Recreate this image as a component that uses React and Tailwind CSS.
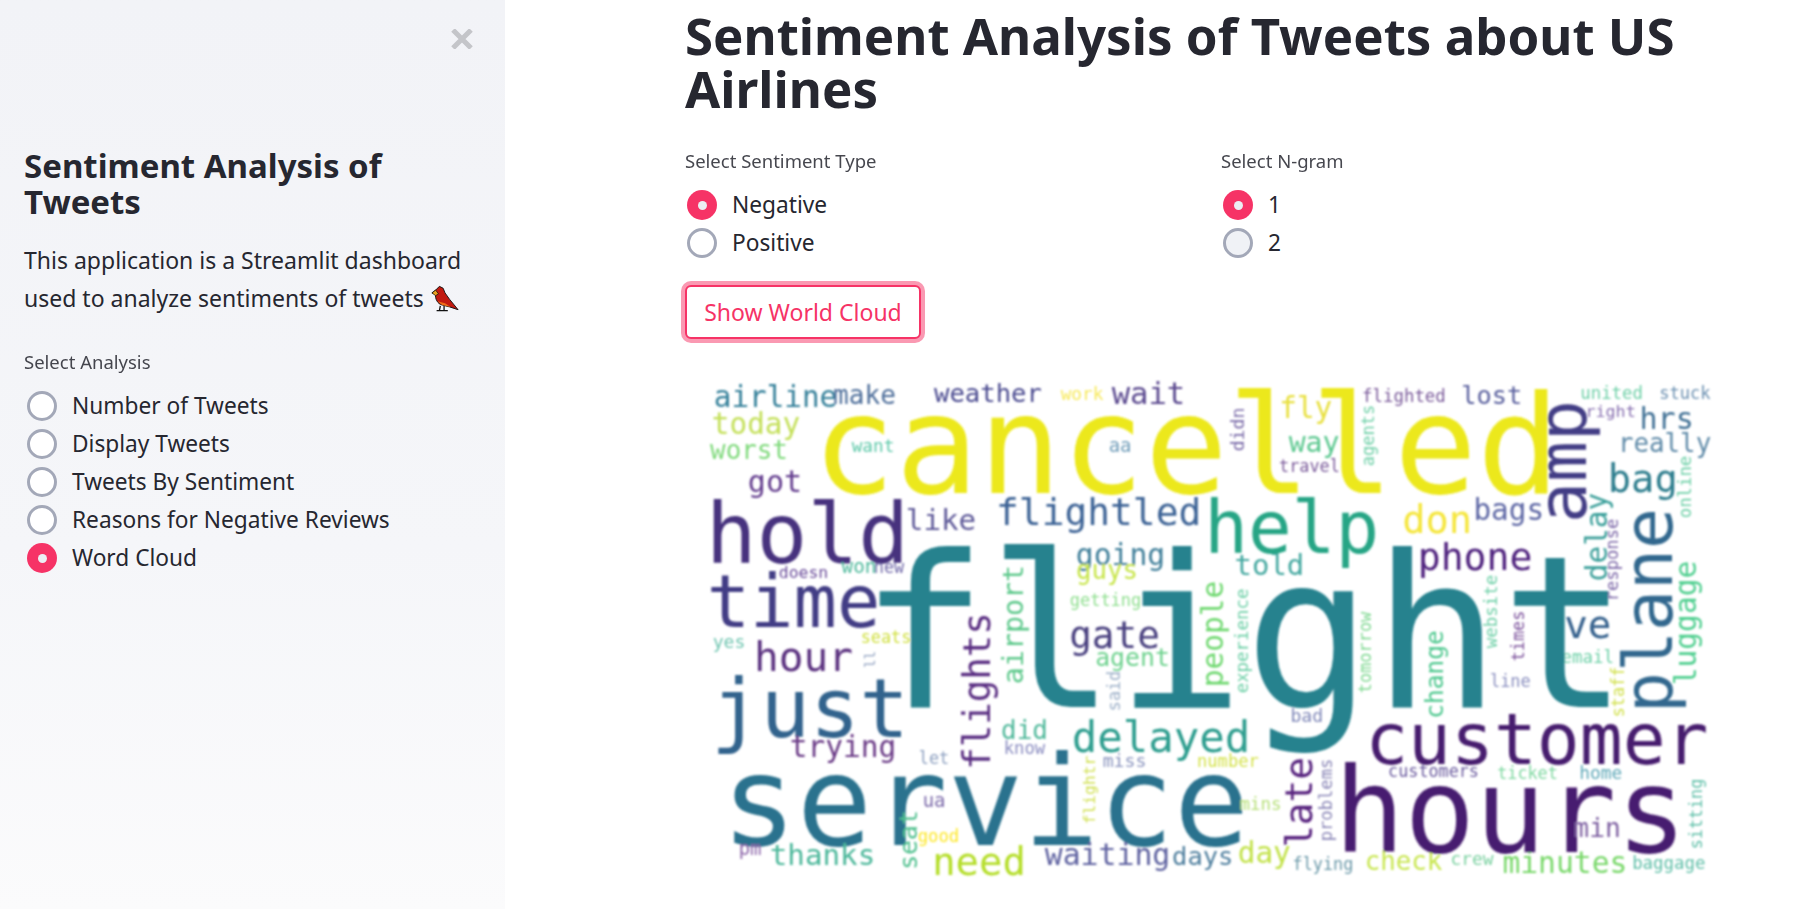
import React from "react";

const rawWords = [
  ["airline",716,835,407,"#35809a"],["make",835,894,404,"#4f6f9b"],["weather",936,1040,402,"#4a4a8f"],["work",1062,1102,400,"#f7e95a"],["wait",1114,1183,404,"#5b4a8f"],
  ["today",714,798,434,"#c4e05a"],["want",853,893,452,"#5cc8a8"],["worst",712,786,459,"#7ed97a"],["aa",1110,1130,452,"#6e9bb8"],
  ["cancelled",822,1537,493,"#ece81a",138],["got",750,800,492,"#643d8e"],["hold",712,903,563,"#46337e"],["flightled",999,1198,525,"#3e6496"],["like",908,974,530,"#5f5a99"],
  ["going",1078,1163,565,"#3f7f9a"],["doesn",780,827,578,"#6a4c9a"],["won",843,875,573,"#4cb89a"],["new",875,903,573,"#7068a8"],["guys",1078,1136,579,"#c7e548"],
  ["time",712,875,627,"#433e85"],["getting",1071,1140,606,"#8fdf8f"],["seats",862,910,643,"#d0e040"],["yes",714,744,648,"#6fc5b0"],["hour",757,850,671,"#5c3180"],
  ["just",717,903,737,"#33638d"],["gate",1072,1157,648,"#48407f"],["agent",1097,1168,666,"#6ed28e"],["did",1003,1046,739,"#4fb89a"],["know",1005,1044,754,"#8a8cc0"],
  ["let",920,948,764,"#8da0c0"],["delayed",1075,1245,752,"#2f9e8f"],["trying",792,894,757,"#6a3a86"],["miss",1104,1145,767,"#8a94be"],["number",1198,1255,767,"#d4e24a"],
  ["ua",924,944,807,"#7a68a8"],["service",731,1238,845,"#2c728e"],["good",919,958,842,"#fde725"],["pm",740,760,855,"#8a64a8"],["thanks",772,873,865,"#4bb79a"],
  ["need",935,1023,875,"#b5de2b"],["waiting",1047,1168,865,"#5e62a0"],["days",1174,1230,865,"#4f7f9e"],["day",1238,1285,863,"#c2e24a"],["flying",1290,1346,870,"#6a98a8"],
  ["check",1360,1431,870,"#c8e650"],["crew",1442,1481,865,"#7ad0a0"],["minutes",1493,1609,873,"#79d86a"],["baggage",1617,1685,869,"#60bfa8"],["hours",1337,1660,852,"#471e6f"],
  ["min",1561,1603,837,"#7d5fa0"],["customer",1364,1684,764,"#461d6e"],["customers",1382,1467,777,"#6a5a9e"],["ticket",1487,1543,779,"#7ed8a0"],["home",1566,1605,779,"#5fa8b8"],
  ["mins",1239,1277,810,"#b8e07a"],["bad",1288,1317,722,"#8088b8"],["line",1480,1517,687,"#8a8fbf"],["email",1549,1597,663,"#6fd0a8"],["ve",1553,1593,638,"#34618d"],
  ["flight",883,1590,707,"#26828e",213],["bag",1595,1657,492,"#2e7e8e"],["phone",1412,1517,570,"#4f237e"],["bags",1465,1529,520,"#5e68a5"],["don",1397,1459,533,"#f5e63e"],
  ["told",1235,1298,575,"#45a8a0"],["help",1209,1367,553,"#25a585"],["travel",1277,1333,472,"#7a5a9a"],["way",1287,1332,452,"#5cc88f"],["fly",1278,1325,418,"#e8e040"],
  ["flighted",1357,1435,402,"#7a5a9a"],["lost",1453,1508,404,"#5a609e"],["united",1567,1625,399,"#70d0a8"],["stuck",1643,1690,399,"#6a8fb0"],["right",1572,1618,417,"#8870b0"],
  ["hrs",1625,1673,429,"#3f6f94"],["really",1604,1690,452,"#5f8aa8"],
];

const rawVertical = [
  ["ll",875,652,667,"#8fa0bf"],["flights",990,615,767,"#5a2d82"],["airport",1023,567,682,"#5ec98c"],["said",1120,672,710,"#9db0c8"],["flightr",1095,757,823,"#d0e050"],
  ["seat",917,812,868,"#50c08e"],["sitting",1683,780,848,"#5fbfa8"],["late",1307,760,845,"#57207e"],["problems",1327,760,840,"#8c88b8"],["change",1434,632,717,"#4fc88f"],
  ["tomorrow",1364,613,692,"#7ed890"],["experience",1246,590,692,"#70d0a8"],["people",1222,583,685,"#6fd870"],["website",1486,576,647,"#70d0a8"],["times",1512,612,660,"#7a4f9a"],
  ["staff",1608,668,716,"#d0e048"],["plane",1654,513,708,"#31688e"],["luggage",1677,563,683,"#4fcf8f"],["response",1602,520,600,"#7d68a8"],["delay",1592,495,579,"#3a9f9a"],
  ["online",1672,457,517,"#6fd0a8"],["amp",1571,405,518,"#433e85"],["didn",1242,409,450,"#7a6aa8"],["agents",1367,406,465,"#70d0a8"],
];

const OX = 685;
const OY = 350;
const fixX = (x) => (x > 1190 ? 1190 + (x - 1190) * 1.0385 : x);
const sizeFor = (word, span, forced) => forced || span / (0.6 * word.length - 0.14);

function WordCloud() {
  return (
    <svg width="1040" height="550" viewBox="0 0 1040 550" className="block">
      <defs>
        <filter id="soft" x="-2%" y="-2%" width="104%" height="104%">
          <feGaussianBlur stdDeviation="1" />
        </filter>
      </defs>
      <g filter="url(#soft)" style={{ fontFamily: '"DejaVu Sans Mono", monospace' }}>
        {rawWords.map(([w, x0, x1, y, color, forced]) => {
          const a = fixX(x0);
          const b = fixX(x1);
          const fs = sizeFor(w, b - a, forced);
          return (
            <text key={w + x0} x={(a + b) / 2 - OX} y={y - OY} fontSize={fs} fill={color} textAnchor="middle">{w}</text>
          );
        })}
        {rawVertical.map(([w, bx, yTop, yBot, color]) => {
          const fs = sizeFor(w, yBot - yTop);
          const x = fixX(bx) - OX;
          const y = (yTop + yBot) / 2 - OY;
          return (
            <text key={w + bx} transform={`translate(${x} ${y}) rotate(-90)`} fontSize={fs} fill={color} textAnchor="middle">{w}</text>
          );
        })}
      </g>
    </svg>
  );
}

function Radio({ label, checked, tint, inset }) {
  return (
    <label className={`flex items-center h-[38px] text-[#262730] ${inset ? "pl-[3px]" : "pl-[2px]"}`}>
      {checked ? (
        <span className="flex items-center justify-center w-[30px] h-[30px] rounded-full bg-[#f63366]">
          <span className="w-[9px] h-[9px] rounded-full bg-[#eceef3]" />
        </span>
      ) : (
        <span className={`w-[30px] h-[30px] rounded-full border-[3px] border-[#a3a8b8] ${tint ? "bg-[#f0f2f6]" : "bg-white"}`} />
      )}
      <span className="ml-[15px] text-[22.7px] whitespace-nowrap">{label}</span>
    </label>
  );
}

function Group({ title, options, selected, tint, inset }) {
  return (
    <div>
      <div className="h-[30px] flex items-center text-[18.5px] text-[#262730] opacity-85 whitespace-nowrap">{title}</div>
      <div className="mt-[10px]">
        {options.map((o) => (
          <Radio key={o} label={o} checked={o === selected} tint={tint} inset={inset} />
        ))}
      </div>
    </div>
  );
}

function Cardinal() {
  return (
    <svg width="28" height="27" viewBox="0 0 30 28" className="inline-block align-[-5px] ml-[1px]">
      <path d="M9 1 L13 3 L15 8 L20 15 L29 26 L20 23 L12 21 C7 20 4 14 5 9 L1 8 L5 5 Z" fill="#c1190f" stroke="#111" strokeWidth="1" />
      <path d="M1 8 L5 5 L8 9 L5 11 Z" fill="#e9a11f" stroke="#111" strokeWidth="0.8" />
      <path d="M7 17 L15 19 L21 23 L12 21 Z" fill="#ef6a14" />
      <path d="M10 22 L9 27 M14 22 L14 27 M6 27 L12 27 M12 27 L18 27" stroke="#111" strokeWidth="1.4" fill="none" />
    </svg>
  );
}

export default function App() {
  return (
    <div className="flex h-[909px] w-full overflow-hidden bg-white text-[#262730]" style={{ fontFamily: '"Noto Sans", sans-serif' }}>
      <aside className="relative w-[505px] shrink-0 bg-gradient-to-b from-[#f2f3f7] via-[#f5f6f9] via-60% to-[#fbfbfc] px-[24px]">
        <button className="absolute left-[451px] top-[29px] w-[22px] h-[20px]" aria-label="Close">
          <svg viewBox="0 0 22 20" width="22" height="20">
            <path d="M2 1 L20 19 M20 1 L2 19" stroke="#c4c5c9" strokeWidth="5" fill="none" />
          </svg>
        </button>
        <h2 className="pt-[148px] text-[33px] leading-[36px] font-bold">Sentiment Analysis of Tweets</h2>
        <p className="mt-[21px] text-[23px] leading-[38px] whitespace-nowrap">
          This application is a Streamlit dashboard
          <br />
          used to analyze sentiments of tweets <Cardinal />
        </p>
        <div className="mt-[30px]">
          <Group
            inset
            title="Select Analysis"
            selected="Word Cloud"
            options={["Number of Tweets", "Display Tweets", "Tweets By Sentiment", "Reasons for Negative Reviews", "Word Cloud"]}
          />
        </div>
      </aside>
      <main className="flex-1 pl-[180px]">
        <h1 className="w-[1034px] pt-[9px] text-[51px] leading-[53px] font-bold">Sentiment Analysis of Tweets about US Airlines</h1>
        <div className="grid grid-cols-[536px_1fr] w-[1034px] mt-[31px]">
          <Group title="Select Sentiment Type" options={["Negative", "Positive"]} selected="Negative" />
          <Group title="Select N-gram" options={["1", "2"]} selected="1" tint />
        </div>
        <button className="mt-[23px] block w-[236px] h-[54px] rounded-[6px] border-2 border-[#f63366] bg-white text-[23px] text-[#f63366] shadow-[0_0_0_4px_rgba(246,51,102,0.5)] whitespace-nowrap">
          Show World Cloud
        </button>
        <div className="mt-[11px]">
          <WordCloud />
        </div>
      </main>
    </div>
  );
}
